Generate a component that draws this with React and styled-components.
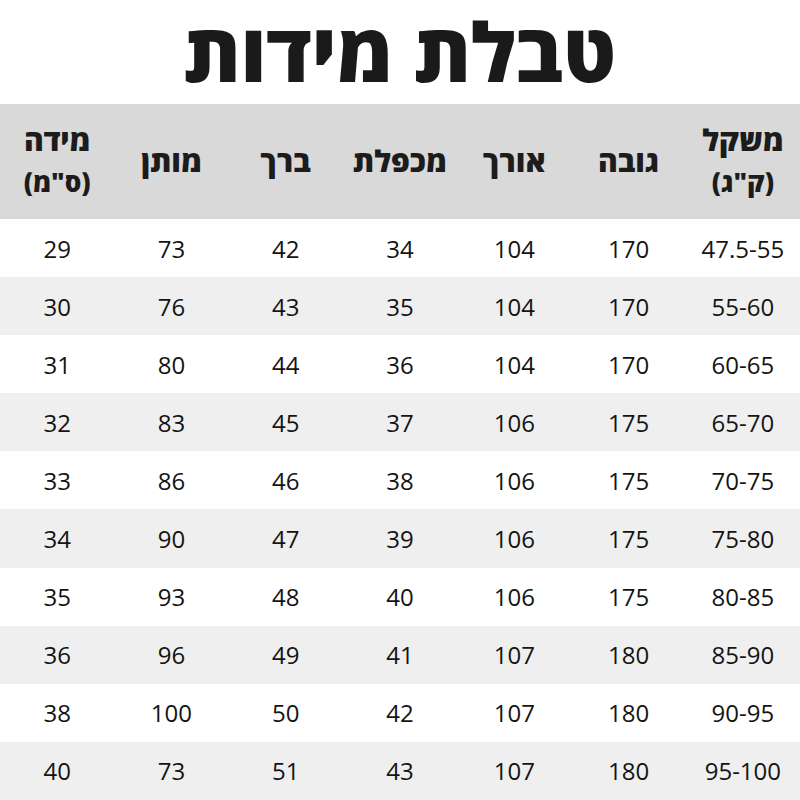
import React from 'react'
import styled, { createGlobalStyle } from 'styled-components'

const GlobalStyle = createGlobalStyle`
  html, body {
    margin: 0;
    padding: 0;
    background: #ffffff;
  }
  body {
    width: 800px;
    height: 800px;
    overflow: hidden;
    font-family: "Liberation Sans", "DejaVu Sans", sans-serif;
  }
`

const headers = [
  ['משקל', '(ק"ג)'],
  ['גובה'],
  ['אורך'],
  ['מכפלת'],
  ['ברך'],
  ['מותן'],
  ['מידה', '(ס"מ)'],
]

// weight, height, length, inseam, knee, waist, size
const rows = [
  ['47.5-55', 170, 104, 34, 42, 73, 29],
  ['55-60', 170, 104, 35, 43, 76, 30],
  ['60-65', 170, 104, 36, 44, 80, 31],
  ['65-70', 175, 106, 37, 45, 83, 32],
  ['70-75', 175, 106, 38, 46, 86, 33],
  ['75-80', 175, 106, 39, 47, 90, 34],
  ['80-85', 175, 106, 40, 48, 93, 35],
  ['85-90', 180, 107, 41, 49, 96, 36],
  ['90-95', 180, 107, 42, 50, 100, 38],
  ['95-100', 180, 107, 43, 51, 73, 40],
]

const Page = styled.main`
  direction: rtl;
  width: 800px;
  height: 800px;
  display: flex;
  flex-direction: column;
`

const Title = styled.h1`
  margin: 0;
  padding: 0 0 2px;
  height: 104px;
  box-sizing: border-box;
  display: flex;
  align-items: center;
  justify-content: center;
  font-family: "Open Sans", "Liberation Sans", sans-serif;
  font-size: 81px;
  line-height: 1.2;
  font-weight: 800;
  color: #1a1a1a;
  white-space: nowrap;
`

const Grid = styled.div`
  flex: 1;
  display: grid;
  grid-template-columns: repeat(7, 1fr);
  grid-template-rows: 115px repeat(10, 1fr);
`

const HeadRow = styled.div`
  display: contents;
`

const HeadCell = styled.div`
  background: #d9d9d9;
  display: flex;
  flex-direction: column;
  align-items: center;
  justify-content: center;
  font-family: "Open Sans", "Liberation Sans", sans-serif;
  font-weight: 800;
  font-size: 30px;
  line-height: 42px;
  color: #1c1c1c;
  padding-bottom: 2px;
`

const Sub = styled.span`
  font-size: 26px;
`

const Cell = styled.div`
  background: ${(p) => (p.$shade ? '#efefef' : '#ffffff')};
  display: flex;
  align-items: center;
  justify-content: center;
  font-family: "Open Sans", "Noto Sans", sans-serif;
  font-size: 24px;
  color: #141414;
  direction: ltr;
`

export default function App() {
  return (
    <>
      <GlobalStyle />
      <Page>
        <Title>טבלת מידות</Title>
        <Grid>
          <HeadRow>
            {headers.map((h, i) => (
              <HeadCell key={i}>
                <span>{h[0]}</span>
                {h[1] && <Sub>{h[1]}</Sub>}
              </HeadCell>
            ))}
          </HeadRow>
          {rows.map((r, ri) =>
            r.map((v, ci) => (
              <Cell key={`${ri}-${ci}`} $shade={ri % 2 === 1}>
                {v}
              </Cell>
            ))
          )}
        </Grid>
      </Page>
    </>
  )
}
